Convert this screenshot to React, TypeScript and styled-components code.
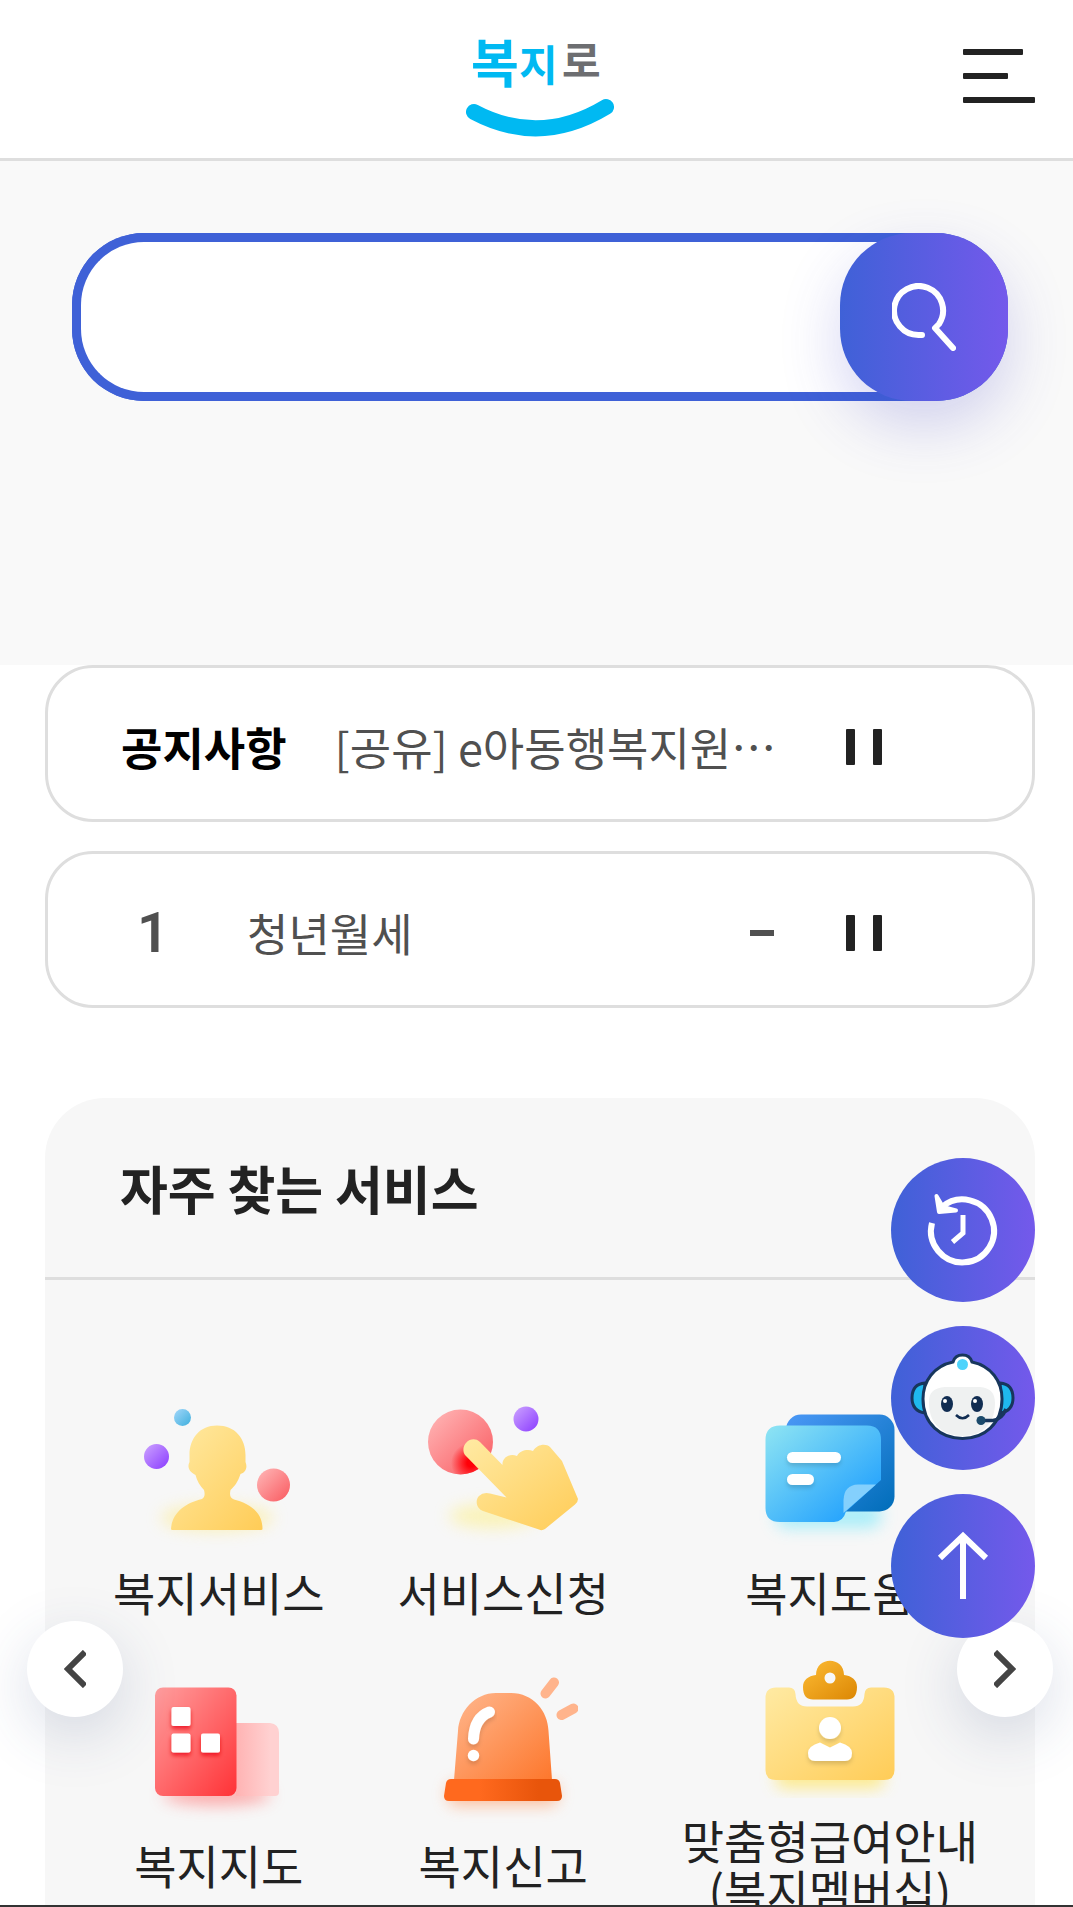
import React from 'react';
import styled, { createGlobalStyle } from 'styled-components';

const GlobalStyle = createGlobalStyle`
  *, *::before, *::after { box-sizing: border-box; }
  body {
    margin: 0;
    background: #fff;
    color: #222;
    font-family: "Noto Sans CJK KR", "Noto Sans", sans-serif;
  }
  button { font: inherit; color: inherit; border: 0; padding: 0; background: none; cursor: pointer; }
  a { color: inherit; text-decoration: none; }
  h2, h3, p, ul { margin: 0; padding: 0; }
  svg { display: block; }
`;

const Page = styled.div`
  position: relative;
  height: 100vh;
  overflow: hidden;
  border-bottom: 2px solid #333;
`;

const Header = styled.header`
  display: grid;
  grid-template-columns: 1fr auto 1fr;
  align-items: center;
  height: 161px;
  padding: 0 38px 0 45px;
  border-bottom: 3px solid #dedede;
  background: #fff;
`;

const LogoLink = styled.a`
  grid-column: 2;
`;

const MenuButton = styled.button`
  justify-self: end;
  margin-bottom: 6px;
`;

const Hero = styled.section`
  padding: 72px 65px 264px 72px;
  background: #f9f9f9;
`;

const SearchForm = styled.form`
  display: flex;
  height: 168px;
  border-radius: 72px;
  background: #3f61d7;
`;

const SearchField = styled.div`
  flex: 1;
  min-width: 0;
  margin-right: -72px;
  padding-right: 72px;
  border: 9px solid #3f61d7;
  border-right: 0;
  border-radius: 72px 0 0 72px;
  background: #fff;
`;

const SearchInput = styled.input`
  width: 100%;
  height: 100%;
  padding: 0 48px;
  border: 0;
  outline: 0;
  border-radius: 63px;
  background: transparent;
  font: 46px "Noto Sans CJK KR", sans-serif;
`;

const SearchButton = styled.button`
  position: relative;
  display: grid;
  place-items: center;
  width: 168px;
  border-radius: 72px;
  background: linear-gradient(90deg, #3f61d7, #7459eb);
  box-shadow: 0 24px 60px rgba(70, 70, 200, 0.22);
`;

const Tickers = styled.section`
  display: flex;
  flex-direction: column;
  gap: 29px;
  padding: 0 38px 0 45px;
`;

const Ticker = styled.div`
  display: flex;
  align-items: center;
  height: 157px;
  padding: 6px 150px 0 73px;
  border: 3px solid #dedede;
  border-radius: 48px;
  background: #fff;
`;

const TickerTitle = styled.h2`
  margin-right: 48px;
  color: #000;
  font-size: 45px;
  line-height: 60px;
  font-weight: 700;
  white-space: nowrap;
`;

const Rank = styled.span`
  width: 64px;
  margin-right: 62px;
  color: #505050;
  font-family: Roboto, sans-serif;
  font-size: 56px;
  line-height: 60px;
  font-weight: 600;
  text-align: center;
`;

const TickerText = styled.a`
  flex: 1;
  min-width: 0;
  color: #505050;
  font-size: 45px;
  line-height: 60px;
  white-space: nowrap;
`;

const Unchanged = styled.span`
  width: 24px;
  height: 6px;
  margin-right: 72px;
  background: #505050;
`;

const PauseButton = styled.button`
  display: flex;
  justify-content: space-between;
  width: 36px;
  height: 36px;

  &::before,
  &::after {
    content: "";
    width: 9px;
    border-radius: 1px;
    background: #222;
  }
`;

const Services = styled.section`
  position: relative;
  margin: 90px 38px 0 45px;
  border-radius: 60px 60px 0 0;
  background: #f7f7f7;
`;

const ServicesTitle = styled.h2`
  height: 182px;
  padding: 50px 75px 0;
  border-bottom: 3px solid #dedede;
  font-size: 52px;
  line-height: 80px;
  font-weight: 700;
`;

const ServiceGrid = styled.ul`
  display: grid;
  grid-template-columns: repeat(3, auto);
  justify-content: space-between;
  align-items: center;
  row-gap: 32px;
  padding: 120px 57px 60px 68px;
  list-style: none;
`;

const ServiceLink = styled.a`
  display: flex;
  flex-direction: column;
  align-items: center;
  gap: 16px;
  font-size: 46px;
  line-height: 50px;
  text-align: center;
  white-space: pre-line;
`;

const SlideButton = styled.button<{ $side: 'left' | 'right' }>`
  position: absolute;
  top: 523px;
  ${(p) => p.$side}: -18px;
  display: grid;
  place-items: center;
  width: 96px;
  height: 96px;
  border-radius: 50%;
  background: #fff;
  box-shadow: 0 18px 60px rgba(50, 70, 130, 0.18);
`;

const QuickMenu = styled.nav`
  position: absolute;
  right: 38px;
  top: 1158px;
  display: flex;
  flex-direction: column;
  gap: 24px;
`;

const QuickButton = styled.button`
  width: 144px;
  height: 144px;
  border-radius: 50%;
  background: linear-gradient(90deg, #3f61d7, #7459eb);
`;

const Logo = () => (
  <svg width="148" height="120" viewBox="467 18 148 120" role="img" aria-label="복지로">
    <g fontFamily="'Noto Sans CJK KR', sans-serif" fontWeight="700">
      <text x="472" y="82" fontSize="52" fill="#00b9f2">복</text>
      <text x="520" y="80" fontSize="42" fill="#00b9f2">지</text>
      <text x="563" y="76" fontSize="42" fill="#6d6e71">로</text>
    </g>
    <path d="M475 111 Q541 146 607 106" fill="none" stroke="#00b9f2" strokeWidth="16" strokeLinecap="round" />
  </svg>
);

const MenuIcon = () => (
  <svg width="72" height="55" viewBox="0 0 72 55" fill="#222">
    <rect width="60" height="6" rx="1" />
    <rect y="24" width="45" height="6" rx="1" />
    <rect y="48" width="72" height="6" rx="1" />
  </svg>
);

const SearchIcon = () => (
  <svg width="64" height="68" viewBox="892 284 64 68" fill="none" stroke="#fff" strokeWidth="6" strokeLinejoin="round">
    <path d="M922 336 H919 A24.5 24.5 0 1 1 939 325 L935 329 L953 349" strokeLinecap="round" />
  </svg>
);

const Chevron = ({ flip = false }: { flip?: boolean }) => (
  <svg width="22" height="38" viewBox="0 0 22 38" fill="none" stroke="#444" strokeWidth="6">
    <path d={flip ? 'M1 2 L18 19 L1 36' : 'M21 2 L4 19 L21 36'} />
  </svg>
);

type Stops = [string, string];
const Gradient = ({ id, stops }: { id: string; stops: Stops }) => (
  <linearGradient id={id} x1="0" y1="0" x2="1" y2="1">
    <stop offset="0" stopColor={stops[0]} />
    <stop offset="1" stopColor={stops[1]} />
  </linearGradient>
);

const DefsSvg = styled.svg`
  position: absolute;
`;

const IconDefs = () => (
  <DefsSvg width="0" height="0" aria-hidden="true">
    <defs>
      <Gradient id="yellow" stops={['#ffeaa3', '#ffcc57']} />
      <Gradient id="purple" stops={['#cda4ff', '#8a3bff']} />
      <Gradient id="sky" stops={['#a3d7fa', '#3eafdd']} />
      <Gradient id="pink" stops={['#ffb9b9', '#f9595f']} />
      <Gradient id="red" stops={['#ff9f9f', '#ff3236']} />
      <Gradient id="orange" stops={['#ffb78e', '#fd772c']} />
      <Gradient id="paper" stops={['#8fe5f3', '#1297ff']} />
      <Gradient id="paperBack" stops={['#4b98f6', '#006db9']} />
      <Gradient id="gold" stops={['#fdbc35', '#dc8704']} />
      <linearGradient id="base">
        <stop offset="0.3" stopColor="#ff691e" />
        <stop offset="0.8" stopColor="#e8550b" />
      </linearGradient>
      <linearGradient id="annex">
        <stop offset="0" stopColor="#ffb3b3" />
        <stop offset="0.8" stopColor="#ffd1d1" />
      </linearGradient>
      <radialGradient id="press">
        <stop offset="0.2" stopColor="#ff0008" />
        <stop offset="1" stopColor="#ff0008" stopOpacity="0" />
      </radialGradient>
      <filter id="glow" x="-50%" y="-150%" width="200%" height="400%">
        <feGaussianBlur stdDeviation="8" />
      </filter>
      <filter id="soft" x="-30%" y="-30%" width="160%" height="180%">
        <feDropShadow dx="0" dy="3" stdDeviation="2" floodColor="#000" floodOpacity="0.15" />
      </filter>
      <filter id="redShade" x="-40%" y="-40%" width="180%" height="200%">
        <feDropShadow dx="0" dy="3" stdDeviation="2" floodColor="#e90008" floodOpacity="0.75" />
      </filter>
    </defs>
  </DefsSvg>
);

const PersonIcon = () => (
  <svg width="150" height="150" viewBox="143 1400 150 150">
    <ellipse cx="216" cy="1518" rx="56" ry="13" fill="#fdeb8e" opacity="0.6" filter="url(#glow)" />
    <path
      fill="url(#yellow)"
      d="M216 1425.500 C234 1425.500 244.500 1438 244.500 1455 V1462 C247 1468 244 1473 239.500 1474 C237 1482 233 1487 229.500 1490 C228.500 1495 229 1498 233 1499.500 C250 1504 261.500 1513 261.500 1529 Q261.500 1530 260 1530 H171.500 Q170 1530 170 1529 C171 1513 184 1503 201 1499 C204 1497 204 1494 203 1490 C199 1486 196 1481 194.500 1475 C188 1472 186 1467 188.500 1462 V1455 C188.500 1438 199 1425.500 216 1425.500Z"
    />
    <circle cx="181.500" cy="1417.500" r="8.500" fill="url(#sky)" />
    <circle cx="155.500" cy="1456.500" r="12.500" fill="url(#purple)" />
    <circle cx="272.500" cy="1485" r="16.500" fill="url(#pink)" />
  </svg>
);

const TouchIcon = () => (
  <svg width="150" height="150" viewBox="430 1400 150 150">
    <defs>
      <clipPath id="pressClip">
        <circle cx="462.500" cy="1442" r="32.500" />
      </clipPath>
    </defs>
    <ellipse cx="495" cy="1516" rx="44" ry="12" fill="#fdf08e" opacity="0.6" filter="url(#glow)" />
    <circle cx="462.500" cy="1442" r="32.500" fill="url(#pink)" />
    <circle cx="473" cy="1463" r="20" fill="url(#press)" clipPath="url(#pressClip)" />
    <circle cx="528" cy="1419" r="12.500" fill="url(#purple)" />
    <path
      fill="url(#yellow)"
      d="M482 1442 L504.500 1465 C504 1458 511 1453 519 1456 C522 1450 530 1449 535 1451 C539 1444 548 1443 552 1447 L564 1461 L580 1499 Q580 1502 577 1504.500 L547 1529 Q544 1531 541 1529.500 L485 1511 C478 1508 477 1500 481 1496 Q485 1492 492 1493.500 L508.500 1497.500 L467 1455 C461 1446 473 1434 482 1442Z"
    />
  </svg>
);

const DocumentIcon = () => (
  <svg width="150" height="150" viewBox="754 1400 150 150">
    <rect x="775" y="1502" width="105" height="26" rx="10" fill="#8aeafa" opacity="0.7" filter="url(#glow)" />
    <rect x="785" y="1414.500" width="108.500" height="97" rx="15" fill="url(#paperBack)" />
    <path
      fill="url(#paper)"
      d="M779 1425.500 H866 Q880 1425.500 880 1440 V1480 L845 1511.500 Q842 1522 833 1522 H779 Q764.500 1522 764.500 1508 V1440 Q764.500 1425.500 779 1425.500Z"
    />
    <path fill="#84d0fd" d="M842.500 1513 V1500 Q843 1485 857 1484.500 H875Z" />
    <g fill="#fff" filter="url(#soft)">
      <rect x="786" y="1452" width="54" height="11" rx="5.500" />
      <rect x="786" y="1474" width="27" height="11" rx="5.500" />
    </g>
  </svg>
);

const BuildingIcon = () => (
  <svg width="150" height="150" viewBox="143 1673 150 150">
    <ellipse cx="216" cy="1795" rx="54" ry="10" fill="#ff7474" opacity="0.6" filter="url(#glow)" />
    <path d="M235 1723 H269 Q278 1724 278 1733 V1792 Q278 1796 274 1796 H235Z" fill="url(#annex)" />
    <rect x="154" y="1687.500" width="81.500" height="108.500" rx="8" fill="url(#red)" />
    <g fill="#fff" filter="url(#redShade)">
      <rect x="170.500" y="1707" width="19" height="19" rx="2" />
      <rect x="170.500" y="1733.500" width="19" height="19" rx="2" />
      <rect x="200" y="1733.500" width="19" height="19" rx="2" />
    </g>
  </svg>
);

const AlarmIcon = () => (
  <svg width="150" height="150" viewBox="430 1673 150 150">
    <rect x="450" y="1783" width="110" height="22" rx="8" fill="#ff9d68" opacity="0.65" filter="url(#glow)" />
    <path d="M498 1693 H513 C535 1693 550 1711 550.500 1731 L554 1780 H456 L460 1731 C461 1711 477 1693 498 1693Z" fill="url(#orange)" />
    <path d="M453 1779 H557 Q561 1779 562 1783 L564 1796 Q564 1801 559 1801 H451 Q446 1801 446 1796 L448 1783 Q449 1779 453 1779Z" fill="url(#base)" />
    <g filter="url(#soft)">
      <path d="M491.500 1712 C481 1716 476 1726 475.500 1739" fill="none" stroke="#fff" strokeWidth="11" strokeLinecap="round" />
      <circle cx="475.500" cy="1755.500" r="5.700" fill="#fff" />
    </g>
    <path d="M556 1682.500 L547.500 1693.500 M575.500 1708.500 L563.500 1715" stroke="#ffb48c" strokeWidth="10" strokeLinecap="round" />
  </svg>
);

const ClipboardIcon = () => (
  <svg width="150" height="150" viewBox="754 1648 150 150">
    <rect x="775" y="1766" width="108" height="22" rx="8" fill="#ffe45e" opacity="0.7" filter="url(#glow)" />
    <path
      fill="url(#yellow)"
      d="M775 1687.500 H788 Q794 1687.500 794.500 1694 Q795 1706.500 806 1706.500 H852 Q863 1706.500 863.500 1694 Q864 1687.500 870 1687.500 H883 Q893.500 1687.500 893.500 1698 V1770 Q893.500 1780 883 1780 H775 Q764.500 1780 764.500 1770 V1698 Q764.500 1687.500 775 1687.500Z"
    />
    <path
      fill="url(#gold)"
      fillRule="evenodd"
      d="M815 1675 C815 1656 843 1656 843 1675 C851 1676 856 1680 856 1687 C856 1696 852 1699.500 846 1699.500 H812 C806 1699.500 802 1696 802 1687 C802 1680 807 1676 815 1675Z M829 1672.500 A5.500 5.500 0 1 0 829 1683.500 A5.500 5.500 0 1 0 829 1672.500Z"
    />
    <g fill="#fff" filter="url(#soft)">
      <circle cx="829" cy="1728" r="11" />
      <path d="M819 1742.500 L829 1747.500 L839 1742.500 Q851 1746 851 1753 Q851 1761 844 1761 H814 Q807 1761 807 1753 Q807 1746 819 1742.500Z" />
    </g>
  </svg>
);

const HistoryIcon = () => (
  <svg width="144" height="144" viewBox="891 1157 144 144" fill="none" stroke="#fff" strokeWidth="6">
    <path d="M932 1222 A31.500 31.500 0 1 0 942 1206" />
    <path d="M936.500 1195 L939 1211 L956 1209.500 L943 1206Z" strokeWidth="4" strokeLinejoin="round" fill="#fff" />
    <path d="M963 1214 V1232 L952.500 1241" strokeWidth="5" />
  </svg>
);

const ChatbotIcon = () => (
  <svg width="144" height="144" viewBox="891 1326 144 144">
    <g stroke="#17365c" strokeWidth="3">
      <path d="M925 1383 Q912 1384 912 1398 Q912 1411 925 1413Z" fill="#1fb8ee" />
      <path d="M1000 1383 Q1013 1384 1013 1398 Q1013 1411 1000 1413Z" fill="#1fb8ee" />
      <path
        d="M953 1362 Q955 1355 962.500 1355 Q970 1355 972 1362 C991 1366 1002 1381 1002 1399 C1002 1424 984 1438.500 962.500 1438.500 C941 1438.500 923 1424 923 1399 C923 1381 934 1366 953 1362Z"
        fill="#fff"
      />
    </g>
    <path d="M945 1387 H980 Q995 1388 995 1403 C995 1425 981 1436 962.500 1436 C944 1436 929 1425 929 1403 Q928 1388 945 1387Z" fill="#eff1f1" />
    <circle cx="962.500" cy="1364.500" r="5.500" fill="#4ed3fb" />
    <ellipse cx="947" cy="1404" rx="6" ry="8" fill="#112d52" />
    <ellipse cx="977" cy="1404" rx="6" ry="8" fill="#112d52" />
    <circle cx="945" cy="1401" r="2" fill="#fff" />
    <circle cx="975" cy="1401" r="2" fill="#fff" />
    <path d="M956 1415 Q962.500 1421.500 969 1415" fill="none" stroke="#112d52" strokeWidth="2.500" />
    <path d="M981 1420.500 H993 Q1002 1419 1006 1409" fill="none" stroke="#17365c" strokeWidth="3.500" />
    <circle cx="981" cy="1420.500" r="4.500" fill="#1b4a6b" />
  </svg>
);

const UpIcon = () => (
  <svg width="144" height="144" viewBox="891 1494 144 144" fill="none" stroke="#fff" strokeWidth="6">
    <path d="M963 1599 V1535 M940 1558 L963 1536 L986 1558" />
  </svg>
);

const services = [
  { label: '복지서비스', Icon: PersonIcon },
  { label: '서비스신청', Icon: TouchIcon },
  { label: '복지도움', Icon: DocumentIcon },
  { label: '복지지도', Icon: BuildingIcon },
  { label: '복지신고', Icon: AlarmIcon },
  { label: '맞춤형급여안내\n(복지멤버십)', Icon: ClipboardIcon },
];

export default function App() {
  return (
    <Page>
      <GlobalStyle />
      <IconDefs />
      <Header>
        <LogoLink href="#">
          <Logo />
        </LogoLink>
        <MenuButton type="button" aria-label="전체메뉴">
          <MenuIcon />
        </MenuButton>
      </Header>

      <main>
        <Hero>
          <SearchForm role="search">
            <SearchField>
              <SearchInput type="text" aria-label="검색어" />
            </SearchField>
            <SearchButton type="button" aria-label="검색">
              <SearchIcon />
            </SearchButton>
          </SearchForm>
        </Hero>

        <Tickers>
          <Ticker>
            <TickerTitle>공지사항</TickerTitle>
            <TickerText href="#">[공유] e아동행복지원…</TickerText>
            <PauseButton type="button" aria-label="공지 정지" />
          </Ticker>
          <Ticker>
            <Rank>1</Rank>
            <TickerText href="#">청년월세</TickerText>
            <Unchanged />
            <PauseButton type="button" aria-label="순위 정지" />
          </Ticker>
        </Tickers>

        <Services>
          <ServicesTitle>자주 찾는 서비스</ServicesTitle>
          <ServiceGrid>
            {services.map(({ label, Icon }) => (
              <li key={label}>
                <ServiceLink href="#">
                  <Icon />
                  {label}
                </ServiceLink>
              </li>
            ))}
          </ServiceGrid>
          <SlideButton $side="left" type="button" aria-label="이전">
            <Chevron />
          </SlideButton>
          <SlideButton $side="right" type="button" aria-label="다음">
            <Chevron flip />
          </SlideButton>
        </Services>
      </main>

      <QuickMenu aria-label="빠른 메뉴">
        <QuickButton type="button" aria-label="최근 이용">
          <HistoryIcon />
        </QuickButton>
        <QuickButton type="button" aria-label="챗봇">
          <ChatbotIcon />
        </QuickButton>
        <QuickButton type="button" aria-label="맨 위로">
          <UpIcon />
        </QuickButton>
      </QuickMenu>
    </Page>
  );
}
